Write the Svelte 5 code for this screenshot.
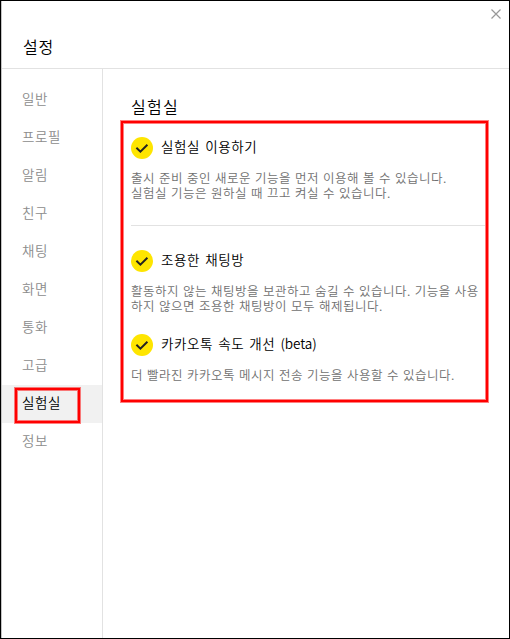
<script lang="ts">
	let menus = ['일반', '프로필', '알림', '친구', '채팅', '화면', '통화', '고급', '실험실', '정보'];
	let selected = $state('실험실');

	let labs = $state([
		{
			title: '실험실 이용하기',
			tag: '',
			desc: '출시 준비 중인 새로운 기능을 먼저 이용해 볼 수 있습니다.\n실험실 기능은 원하실 때 끄고 켜실 수 있습니다.',
			checked: true,
			divider: true
		},
		{
			title: '조용한 채팅방',
			tag: '',
			desc: '활동하지 않는 채팅방을 보관하고 숨길 수 있습니다. 기능을 사용\n하지 않으면 조용한 채팅방이 모두 해제됩니다.',
			checked: true,
			divider: false
		},
		{
			title: '카카오톡 속도 개선',
			tag: '(beta)',
			desc: '더 빨라진 카카오톡 메시지 전송 기능을 사용할 수 있습니다.',
			checked: true,
			divider: false
		}
	]);
</script>

<div class="window">
	<header>
		<button class="close" aria-label="닫기">
			<svg width="10" height="10" viewBox="0 0 10 10">
				<path d="M0.5 0.5L9.5 9.5M9.5 0.5L0.5 9.5" stroke="#999" stroke-width="1.2" />
			</svg>
		</button>
		<h1>설정</h1>
	</header>

	<div class="body">
		<nav>
			{#each menus as menu}
				<button class="menu" class:active={menu === selected} onclick={() => (selected = menu)}>
					<span>{menu}</span>
				</button>
			{/each}
		</nav>

		<main>
			<h2>실험실</h2>
			<section>
				{#each labs as lab}
					<div class="lab" class:divider={lab.divider}>
						<button class="toggle" onclick={() => (lab.checked = !lab.checked)}>
							<svg width="22" height="22" viewBox="0 0 22 22">
								<circle cx="11" cy="11" r="11" fill={lab.checked ? '#fee500' : '#ddd'} />
								<path d="M5.4 10.8L9.4 14.6L16.4 7.8" fill="none" stroke="#222" stroke-width="2" />
							</svg>
							<span>
								{lab.title}
								{#if lab.tag}<span class="tag">{lab.tag}</span>{/if}
							</span>
						</button>
						<p>{lab.desc}</p>
					</div>
				{/each}
			</section>
		</main>
	</div>

	<!-- Red highlight boxes -->
	<div class="mark mark-menu"></div>
	<div class="mark mark-content"></div>
</div>

<style>
	:global(body) {
		margin: 0;
		background: #fff;
	}

	.window {
		position: relative;
		display: flex;
		flex-direction: column;
		box-sizing: border-box;
		width: 510px;
		height: 639px;
		border: 1px solid #000;
		box-shadow: inset 1px 0 #c4c4c4;
		color: #000;
		font-family: 'Noto Sans CJK KR', sans-serif;
		font-weight: 350;
		overflow: hidden;
	}

	h1,
	h2,
	p {
		margin: 0;
		font-weight: 350;
	}

	button {
		padding: 0;
		border: 0;
		background: none;
		color: inherit;
		font: inherit;
		text-align: left;
	}

	svg {
		display: block;
	}

	header {
		display: flex;
		flex-direction: column;
		box-sizing: border-box;
		height: 68px;
		margin-left: 1px;
		padding: 8px 8px 0 21px;
		border-bottom: 1px solid #e2e2e2;
	}

	.close {
		align-self: flex-end;
	}

	h1 {
		margin-top: 15px;
		font-size: 16px;
		line-height: 24px;
		letter-spacing: 0.8px;
	}

	.body {
		display: flex;
		flex: 1;
		margin-left: 1px;
	}

	nav {
		display: flex;
		flex-direction: column;
		box-sizing: border-box;
		width: 101px;
		padding-top: 12px;
		border-right: 1px solid #e2e2e2;
	}

	.menu {
		height: 38px;
		padding: 0 0 4px 20px;
		color: #8c8c8c;
		font-size: 13.5px;
		letter-spacing: 0.6px;
	}

	.menu.active {
		background: #f1f1f1;
		color: #000;
	}

	main {
		flex: 1;
		padding: 25px 0 0 28px;
	}

	h2 {
		font-size: 16px;
		line-height: 24px;
		letter-spacing: 1.3px;
	}

	section {
		display: flex;
		flex-direction: column;
		width: 354px;
		padding-top: 19px;
	}

	.lab {
		padding-bottom: 21px;
	}

	.lab.divider {
		margin-bottom: 24px;
		padding-bottom: 25px;
		border-bottom: 1px solid #e2e2e2;
	}

	.toggle {
		display: flex;
		gap: 8px;
		font-size: 13.5px;
		line-height: 19px;
		letter-spacing: 0.6px;
		word-spacing: 1.5px;
	}

	.tag {
		letter-spacing: -0.1px;
	}

	p {
		padding-top: 11px;
		color: #707070;
		font-size: 12.5px;
		line-height: 15px;
		letter-spacing: 0.5px;
		word-spacing: 0.7px;
		white-space: pre;
	}

	.mark {
		position: absolute;
		box-sizing: border-box;
		border: 2px solid #f00;
		box-shadow:
			0 0 0 1px rgba(255, 0, 0, 0.5),
			inset 0 0 0 1px rgba(255, 0, 0, 0.5);
		pointer-events: none;
	}

	.mark-menu {
		top: 387px;
		left: 14px;
		width: 65px;
		height: 35px;
	}

	.mark-content {
		top: 120px;
		left: 120px;
		width: 367px;
		height: 281px;
	}
</style>
